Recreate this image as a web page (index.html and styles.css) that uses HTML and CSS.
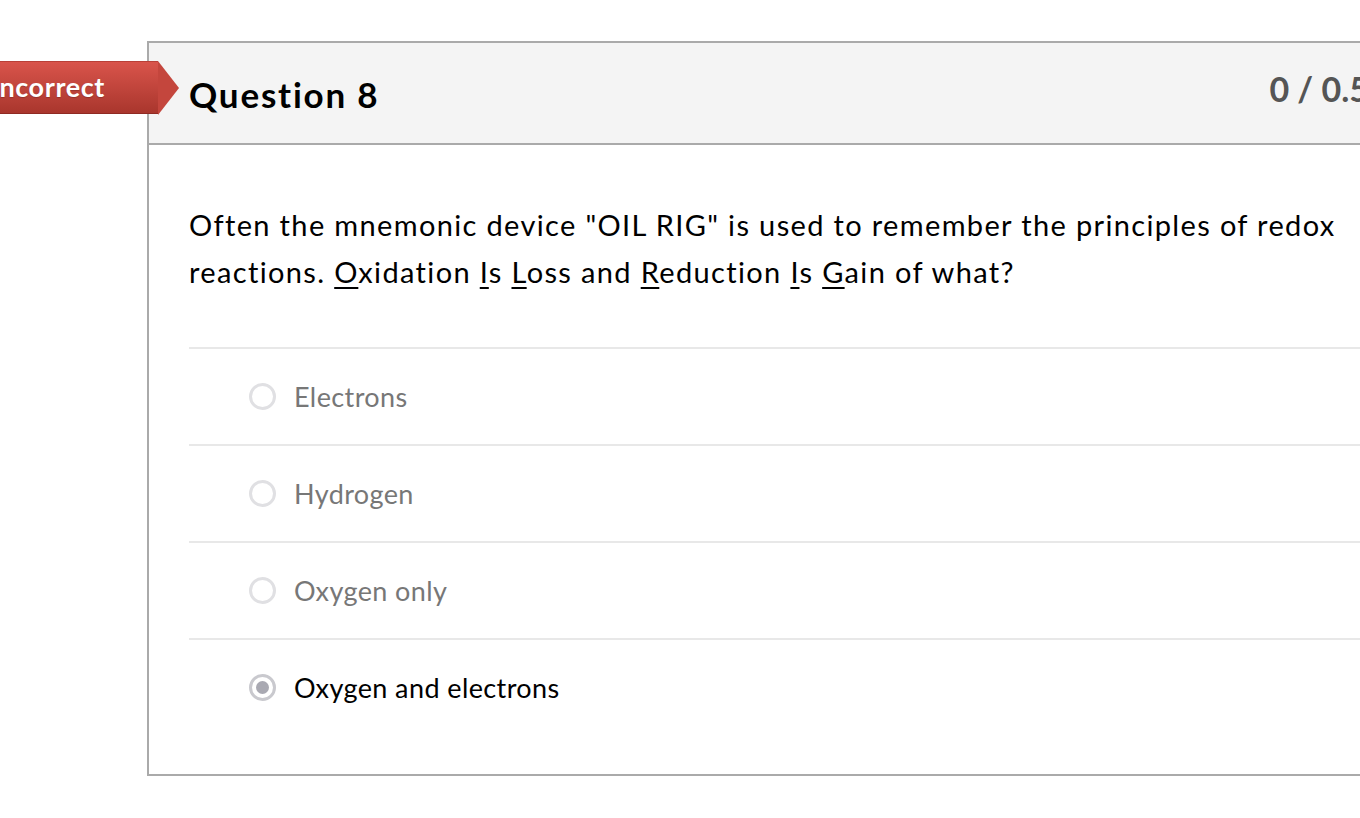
FILE: index.html
```html
<!DOCTYPE html>
<html>
<head>
<meta charset="utf-8">
<link rel="stylesheet" href="styles.css">
</head>
<body>
<div class="page">
  <div class="badge">Incorrect</div>
  <div class="card">
    <div class="card-head">
      <h2 class="title">Question 8</h2>
      <div class="score">0 / 0.5</div>
    </div>
    <div class="card-body">
      <p class="question">Often the mnemonic device "OIL RIG" is used to remember the principles of redox reactions. <u>O</u>xidation <u>I</u>s <u>L</u>oss and <u>R</u>eduction <u>I</u>s <u>G</u>ain of what?</p>
      <ul class="options">
        <li class="option"><span class="radio"></span><span class="label">Electrons</span></li>
        <li class="option"><span class="radio"></span><span class="label">Hydrogen</span></li>
        <li class="option"><span class="radio"></span><span class="label">Oxygen only</span></li>
        <li class="option selected"><span class="radio"></span><span class="label">Oxygen and electrons</span></li>
      </ul>
    </div>
  </div>
</div>
</body>
</html>
```

FILE: styles.css
```css
html, body {
  margin: 0;
  padding: 0;
  background: #fff;
  overflow: hidden;
  font-family: Lato, "Open Sans", sans-serif;
}
.page {
  position: relative;
  width: 1360px;
  height: 818px;
  padding: 41px 0 0 147px;
  box-sizing: border-box;
}
.badge {
  position: absolute;
  left: -9px;
  top: 61px;
  height: 53px;
  width: 167px;
  box-sizing: border-box;
  padding-left: 0;
  background: linear-gradient(#d9544b, #a9362d);
  color: #fff;
  font-weight: 700;
  font-size: 27px;
  letter-spacing: 0.6px;
  line-height: 50px;
  border-top: 1px solid #b94038;
  border-bottom: 1px solid #8f2a23;
  text-shadow: 0 1px 1px rgba(0,0,0,0.2);
}
.badge::after {
  content: "";
  position: absolute;
  right: -21px;
  top: -1px;
  width: 0;
  height: 0;
  border-top: 27px solid transparent;
  border-bottom: 27px solid transparent;
  border-left: 21px solid #c4463d;
}
.card {
  width: 1250px;
  border: 2px solid #aaa;
  background: #fff;
}
.card-head {
  height: 100px;
  background: #f4f4f4;
  border-bottom: 2px solid #aaa;
  display: flex;
  justify-content: space-between;
  align-items: flex-start;
  padding: 0 30px 0 40px;
}
.title {
  margin: 25px 0 0 0;
  font-size: 35px;
  letter-spacing: 1.8px;
  font-weight: 700;
  color: #000;
  line-height: 52px;
}
.score {
  margin-top: 20px;
  font-size: 34px;
  font-weight: 700;
  color: #555;
  line-height: 52px;
}
.card-body {
  padding: 56px 0 39px 40px;
}
.question {
  margin: 0 0 52px 0;
  font-size: 29px;
  letter-spacing: 1.35px;
  line-height: 47px;
  color: #000;
  padding-right: 40px;
}
.question u {
  text-decoration-thickness: 2px;
  text-underline-offset: 4px;
}
.options {
  list-style: none;
  margin: 0;
  padding: 0;
}
.option {
  height: 95px;
  border-top: 2px solid #e8e8e8;
  display: flex;
  align-items: center;
  padding-left: 60px;
}
.radio {
  width: 27px;
  height: 27px;
  box-sizing: border-box;
  border: 3px solid #e0e0e3;
  border-radius: 50%;
  margin-right: 18px;
  position: relative;
}
.label {
  font-size: 27px;
  letter-spacing: 0.4px;
  color: #777;
}
.option.selected .label {
  color: #000;
}
.option.selected .radio {
  border-color: #c9c9ce;
}
.option.selected .radio::after {
  content: "";
  position: absolute;
  left: 4px;
  top: 4px;
  width: 13px;
  height: 13px;
  border-radius: 50%;
  background: #a9a9b2;
}
```
